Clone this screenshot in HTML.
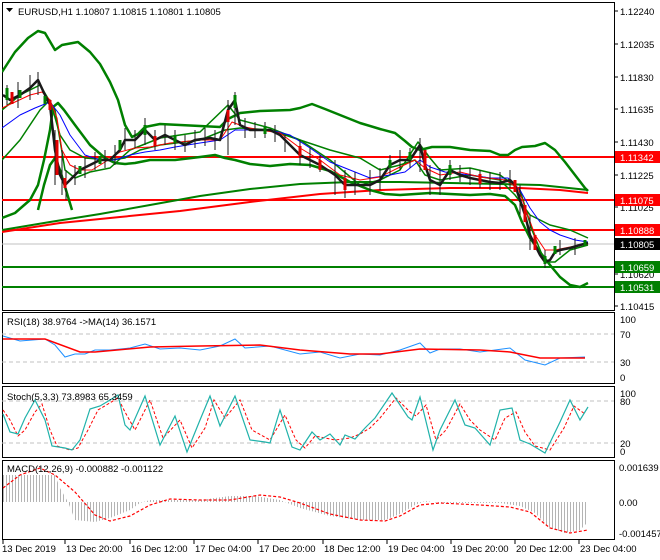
<!DOCTYPE html>
<html><head><meta charset="utf-8"><style>
html,body{margin:0;padding:0;background:#fff;}
svg{display:block;font-family:"Liberation Sans",sans-serif;font-size:9.5px;}
</style></head><body>
<svg width="660" height="560" viewBox="0 0 660 560" xmlns="http://www.w3.org/2000/svg">
<defs>
<pattern id="hs" width="3" height="10" patternUnits="userSpaceOnUse"><rect x="0" y="0" width="1" height="10" fill="#b4b4b4"/></pattern>
<clipPath id="cm"><rect x="2" y="2" width="612" height="308"/></clipPath>
</defs>
<rect width="660" height="560" fill="#fff"/>
<g fill="none" stroke="#000" stroke-width="1">
<rect x="2.5" y="2.5" width="612" height="308"/>
<rect x="2.5" y="312.5" width="612" height="71"/>
<rect x="2.5" y="386.5" width="612" height="71"/>
<rect x="2.5" y="460.5" width="612" height="79"/>
</g>
<g clip-path="url(#cm)" fill="none" stroke-linejoin="round">
<line x1="2" y1="157" x2="614" y2="157" stroke="#f00" stroke-width="2"/>
<line x1="2" y1="200" x2="614" y2="200" stroke="#f00" stroke-width="2"/>
<line x1="2" y1="230" x2="614" y2="230" stroke="#f00" stroke-width="2"/>
<line x1="2" y1="244" x2="614" y2="244" stroke="#c0c0c0" stroke-width="1"/>
<line x1="2" y1="267" x2="614" y2="267" stroke="#008000" stroke-width="2"/>
<line x1="2" y1="287" x2="614" y2="287" stroke="#008000" stroke-width="2"/>
<polyline stroke="#008000" stroke-width="2" points="2,230 50,222 100,214 150,205 200,196 250,189 300,184 350,182 400,182 450,183 500,184 540,185 588,190"/>
<polyline stroke="#f00" stroke-width="2" points="2,232 60,223 120,217 180,211 250,202 320,194 380,190 450,188 520,188 560,190 588,193"/>
<polyline stroke="#008000" stroke-width="2.5" points="2,72 15,52 28,38 38,31 45,33 55,50 62,45 78,42 90,52 100,64 110,82 118,100 125,125 132,137 138,134 145,127 160,124 180,125 200,126 220,127 228,119 240,113 260,111 290,110 300,108 312,104 325,109 340,115 360,123 380,129 395,133 405,141 412,147 420,150 432,147 450,147 470,150 490,151 500,155 508,155 515,150 522,147 535,146 545,143 555,150 565,162 575,175 585,188 588,191"/>
<polyline stroke="#008000" stroke-width="2.5" points="2,218 15,213 30,200 38,185 44,160 50,130 53,107 58,103 64,110 75,125 90,145 105,158 115,163 125,164 135,163 150,160 175,160 200,157 215,155 225,158 235,160 250,164 270,166 290,164 310,165 330,171 350,182 370,190 385,194 400,195 415,194 430,193 450,194 470,195 490,194 505,196 515,205 522,222 530,238 540,252 550,265 560,277 570,285 580,287 588,283"/>
<polyline stroke="#008000" stroke-width="2.5" points="38,210 44,185 50,165 55,158 60,170 66,190 72,210"/>
<polyline stroke="#008000" stroke-width="1.5" points="2,160 20,140 40,110 50,100 60,135 70,150 85,158 110,160 125,158 140,150 160,145 200,140 225,130 240,128 270,130 300,140 330,150 360,158 380,170 400,165 415,160 425,175 440,180 470,175 500,180 515,195 530,215 550,225 570,230 588,238"/>
<polyline stroke="#008000" stroke-width="1.5" points="2,110 20,95 40,85 55,110 65,170 75,178 90,172 110,168 130,150 160,138 200,132 228,105 240,120 270,128 300,140 330,160 360,185 380,180 400,170 418,142 430,158 440,170 470,168 500,175 520,190 532,230 545,262 555,262 570,250 588,245"/>
<polyline stroke="#00f" stroke-width="1" points="2,128 20,115 35,108 50,102 60,115 70,135 85,155 100,160 115,160 130,155 145,152 160,150 175,147 200,143 220,140 235,130 250,130 270,130 290,135 310,148 330,162 350,170 370,178 390,175 405,172 420,160 430,167 445,172 470,175 490,178 508,178 520,190 530,208 540,222 550,230 560,235 575,240 588,242"/>
<polyline stroke="#f00" stroke-width="1" points="2,108 15,102 30,95 42,92 50,100 57,118 62,150 70,165 80,170 92,170 105,162 120,152 135,148 150,147 170,143 200,140 220,140 232,122 245,127 260,130 280,133 300,148 320,160 340,175 360,180 380,177 400,167 415,160 425,168 440,175 460,172 480,177 505,180 518,188 526,210 535,235 545,250 555,250 570,247 588,244"/>
<polyline stroke="#1a1a1a" stroke-width="2.5" points="3,95 10,100 20,95 30,88 38,80 45,95 50,105 55,150 60,175 65,185 70,180 80,170 90,165 100,160 110,160 120,150 125,140 135,140 145,130 155,140 165,135 175,140 185,145 195,140 210,138 220,140 228,110 235,100 240,125 250,130 260,130 270,130 280,135 290,145 300,155 310,160 320,165 335,175 345,185 355,185 370,185 380,180 390,165 400,160 410,160 420,145 425,165 430,180 440,185 450,170 460,175 470,178 480,180 490,182 500,183 510,180 515,185 520,200 525,215 530,235 535,245 540,255 545,262 550,260 555,252 560,250 570,248 580,245 588,243"/>
<path stroke="#1a1a1a" stroke-width="1" d="M7,85V105M18,82V108M30,75V100M38,72V95M55,130V185M62,150V195M66,170V200M75,165V185M85,158V178M95,152V170M105,150V168M115,145V165M125,128V150M135,130V148M145,118V145M155,130V150M165,125V145M175,130V150M185,135V152M195,130V148M205,128V146M215,130V150M228,100V155M235,92V125M245,118V138M255,122V138M265,122V138M275,125V142M285,135V152M300,140V165M310,148V168M320,155V172M335,160V195M345,170V198M355,172V195M370,170V195M380,168V190M390,155V175M400,150V170M410,148V168M420,138V172M430,165V195M440,168V195M450,160V180M460,165V182M470,168V185M480,170V188M490,172V190M500,172V190M510,170V188M520,185V215M530,215V250M545,250V268M560,240V255M575,238V255"/>
<path stroke="#008000" stroke-width="3" d="M7,88V100M20,90V98M45,96V104M80,166V174M100,156V164M120,140V150M145,125V135M175,135V143M235,95V108M265,126V134M390,160V168M410,152V160M450,165V175M545,256V264M555,246V254M585,240V246"/>
<path stroke="#e00000" stroke-width="3" d="M12,92V104M50,100V110M57,140V175M65,178V188M155,136V146M228,110V122M300,146V156M320,160V170M345,178V190M425,150V170M480,174V184M515,180V192M525,205V222M535,235V250"/>
</g>
<line x1="2" y1="334" x2="614" y2="334" stroke="#c0c0c0" stroke-dasharray="4,3"/>
<line x1="2" y1="362" x2="614" y2="362" stroke="#c0c0c0" stroke-dasharray="4,3"/>
<polyline fill="none" stroke="#1e90ff" stroke-width="1" points="3,336 20,341 45,339 55,345 65,357 75,354 85,354 95,350 110,350 130,348 145,344 160,349 180,348 200,350 220,346 235,339 245,348 270,346 300,354 320,352 340,358 360,354 380,355 400,350 420,343 430,353 440,349 460,349 480,352 510,348 525,360 545,365 560,358 585,357"/>
<polyline fill="none" stroke="#f00" stroke-width="1.5" points="3,339 45,339 80,352 95,352 150,347 200,346 260,345 300,350 350,354 380,354 420,349 480,350 510,352 540,358 585,358"/>
<line x1="2" y1="401" x2="614" y2="401" stroke="#c0c0c0" stroke-dasharray="4,3"/>
<line x1="2" y1="443" x2="614" y2="443" stroke="#c0c0c0" stroke-dasharray="4,3"/>
<polyline fill="none" stroke="#f00" stroke-width="1" stroke-dasharray="3,2" points="3,410 10,420 18,436 25,430 35,412 42,404 50,430 57,446 70,450 78,448 88,430 98,410 108,404 118,398 125,412 135,430 150,400 163,438 180,420 192,448 205,428 214,400 225,418 240,400 252,430 270,440 285,415 296,440 305,448 315,436 325,438 335,440 350,438 360,434 370,428 380,418 396,398 410,412 416,416 426,405 436,440 446,430 460,404 470,420 480,430 495,440 505,418 516,412 525,432 535,446 550,450 564,428 574,406 585,414"/>
<polyline fill="none" stroke="#20b2aa" stroke-width="1.2" points="3,414 10,432 18,434 25,418 35,400 45,420 52,446 65,448 72,450 80,440 90,409 100,406 110,400 118,395 125,425 130,430 145,396 160,445 175,416 187,452 200,420 210,396 220,426 235,396 250,440 265,442 270,443 280,410 292,447 300,450 312,432 320,440 330,434 340,445 345,435 355,439 365,428 375,418 392,393 408,417 412,420 420,397 433,450 440,430 455,400 465,425 475,428 490,445 500,410 512,408 520,440 530,444 545,453 560,422 570,400 580,420 588,407"/>
<polygon fill="url(#hs)" points="3,475 55,475 60,488 68,502 75,520 95,522 110,518 130,510 140,503 150,500 200,500 230,496 255,496 280,500 300,508 330,516 360,520 385,520 400,514 415,505 425,501 440,503 500,503 520,506 535,513 550,528 565,533 580,530 588,522 588,502 3,502"/>
<polyline fill="none" stroke="#f00" stroke-width="1.2" stroke-dasharray="3,2" points="3,488 20,475 40,468 55,475 75,492 95,515 110,521 130,516 150,505 170,499 200,500 230,500 260,495 280,497 300,503 330,514 360,520 385,521 400,516 420,505 440,503 480,505 510,507 530,512 550,528 570,533 588,530"/>
<path stroke="#000" d="M3,540V544M65,540V544M130,540V544M194,540V544M258,540V544M323,540V544M387,540V544M451,540V544M515,540V544M579,540V544M614,11H618M614,44H618M614,77H618M614,109H618M614,142H618M614,175H618M614,207H618M614,274H618M614,306H618"/>
<g fill="#000">
<text x="2" y="552">13 Dec 2019</text>
<text x="66" y="552">13 Dec 20:00</text>
<text x="131" y="552">16 Dec 12:00</text>
<text x="195" y="552">17 Dec 04:00</text>
<text x="259" y="552">17 Dec 20:00</text>
<text x="324" y="552">18 Dec 12:00</text>
<text x="388" y="552">19 Dec 04:00</text>
<text x="452" y="552">19 Dec 20:00</text>
<text x="516" y="552">20 Dec 12:00</text>
<text x="580" y="552">23 Dec 04:00</text>
<text x="620" y="15">1.12240</text>
<text x="620" y="48">1.12035</text>
<text x="620" y="81">1.11830</text>
<text x="620" y="113">1.11635</text>
<text x="620" y="146">1.11430</text>
<text x="620" y="179">1.11225</text>
<text x="620" y="211">1.11025</text>
<text x="620" y="278">1.10620</text>
<text x="620" y="310">1.10415</text>
<text x="620" y="323">100</text>
<text x="620" y="338">70</text>
<text x="620" y="366">30</text>
<text x="620" y="381">0</text>
<text x="620" y="397">100</text>
<text x="620" y="405">80</text>
<text x="620" y="447">20</text>
<text x="620" y="455">0</text>
<text x="619" y="471">0.001639</text>
<text x="619" y="506">0.00</text>
<text x="619" y="537">-0.001457</text>
<text x="7" y="325">RSI(18) 38.9764  -&gt;MA(14) 36.1571</text>
<text x="7" y="400">Stoch(5,3,3) 73.8983 65.3459</text>
<text x="7" y="472">MACD(12,26,9) -0.000882 -0.001122</text>
<text x="18" y="15">EURUSD,H1  1.10807 1.10815 1.10801 1.10805</text>
</g>
<path d="M6,8H13L9.5,12Z" fill="#000"/>
<rect x="615" y="151" width="45" height="12" fill="#f00"/>
<rect x="615" y="194" width="45" height="12" fill="#f00"/>
<rect x="615" y="224" width="45" height="12" fill="#f00"/>
<rect x="615" y="238" width="45" height="12" fill="#000"/>
<rect x="615" y="261" width="45" height="12" fill="#008000"/>
<rect x="615" y="281" width="45" height="12" fill="#008000"/>
<g fill="#fff">
<text x="620" y="161">1.11342</text>
<text x="620" y="204">1.11075</text>
<text x="620" y="234">1.10888</text>
<text x="620" y="248">1.10805</text>
<text x="620" y="271">1.10659</text>
<text x="620" y="291">1.10531</text>
</g>
</svg>
</body></html>
